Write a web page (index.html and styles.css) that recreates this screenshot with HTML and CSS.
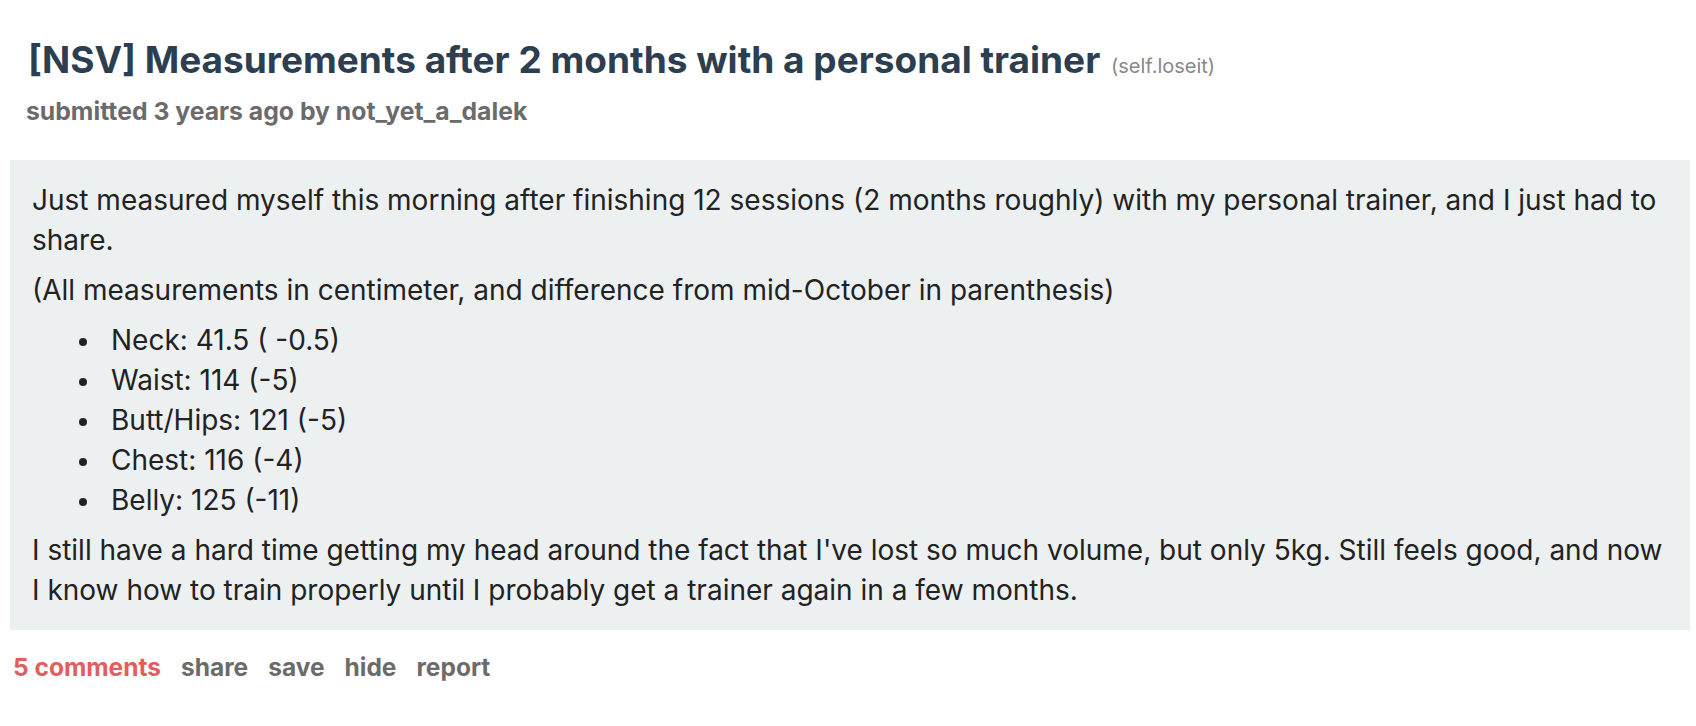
FILE: index.html
```html
<!DOCTYPE html>
<html>
<head>
<meta charset="utf-8">
<link rel="stylesheet" href="styles.css">
</head>
<body>
<div class="post">
  <div class="post-head">
    <h1 class="title">[NSV] Measurements after 2 months with a personal trainer <span class="domain">(self.loseit)</span></h1>
    <div class="tagline">submitted 3 years ago by not_yet_a_dalek</div>
  </div>
  <div class="selftext">
    <p>Just measured myself this morning after finishing 12 sessions (2 months roughly) with my personal trainer, and I just had to share.</p>
    <p>(All measurements in centimeter, and difference from mid-October in parenthesis)</p>
    <ul>
      <li>Neck: 41.5 ( -0.5)</li>
      <li>Waist: 114 (-5)</li>
      <li>Butt/Hips: 121 (-5)</li>
      <li>Chest: 116 (-4)</li>
      <li>Belly: 125 (-11)</li>
    </ul>
    <p>I still have a hard time getting my head around the fact that I've lost so much volume, but only 5kg. Still feels good, and now I know how to train properly until I probably get a trainer again in a few months.</p>
  </div>
  <div class="actions">
    <span class="comments">5 comments</span>
    <span class="act">share</span>
    <span class="act">save</span>
    <span class="act">hide</span>
    <span class="act">report</span>
  </div>
</div>
</body>
</html>
```

FILE: styles.css
```css
html, body {
  margin: 0;
  padding: 0;
  background: #ffffff;
}
.post {
  font-family: Inter, Roboto, "Liberation Sans", sans-serif;
}
.post-head {
  padding: 38px 0 0 28px;
}
.title {
  margin: 0;
  font-size: 37px;
  line-height: 44px;
  font-weight: 700;
  color: #2c3e50;
}
.domain {
  margin-left: 2px;
  font-size: 20px;
  line-height: 1;
  font-weight: 400;
  color: #888888;
}
.tagline {
  margin: 14px 0 0 -2px;
  font-size: 24.75px;
  line-height: 30px;
  font-weight: 700;
  color: #6b6b6b;
}
.selftext {
  margin: 34px 6px 0 10px;
  padding: 10px 22px;
  background: #ecf0f1;
  color: #222222;
  font-size: 28px;
  line-height: 40px;
}
.selftext p {
  margin: 10px 0;
}
.selftext ul {
  margin: 10px 0;
  padding-left: 47px;
  list-style: none;
}
.selftext li::before {
  content: "";
  display: inline-block;
  width: 8px;
  height: 8px;
  margin-right: 24px;
  border-radius: 50%;
  background: #222222;
  vertical-align: middle;
}
.actions {
  display: flex;
  gap: 20px;
  padding: 22px 0 0 13px;
  font-size: 24.5px;
  line-height: 30px;
  font-weight: 700;
  color: #6b6b6b;
}
.comments {
  color: #e35d5d;
}
```
